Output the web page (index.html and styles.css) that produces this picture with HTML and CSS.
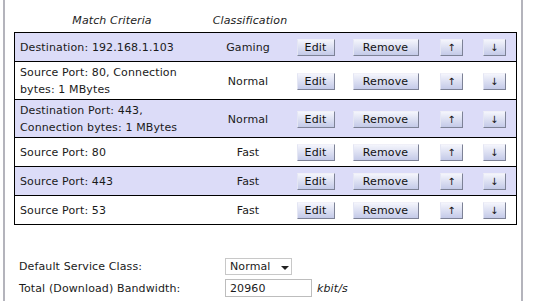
FILE: index.html
```html
<!DOCTYPE html>
<html>
<head>
<meta charset="utf-8">
<link rel="stylesheet" href="styles.css">
</head>
<body>
<div class="page">
  <div class="head">
    <span class="h-crit">Match Criteria</span>
    <span class="h-class">Classification</span>
  </div>
  <table class="rules">
    <colgroup>
      <col class="c1"><col class="c2"><col class="c3"><col class="c4"><col class="c5"><col class="c6">
    </colgroup>
    <tr class="alt">
      <td class="crit">Destination: 192.168.1.103</td>
      <td class="cls">Gaming</td>
      <td class="b"><span class="btn w-edit">Edit</span></td>
      <td class="b"><span class="btn w-rem">Remove</span></td>
      <td class="b"><span class="btn w-arr">↑</span></td>
      <td class="b"><span class="btn w-arr">↓</span></td>
    </tr>
    <tr>
      <td class="crit">Source Port: 80, Connection bytes: 1 MBytes</td>
      <td class="cls">Normal</td>
      <td class="b"><span class="btn w-edit">Edit</span></td>
      <td class="b"><span class="btn w-rem">Remove</span></td>
      <td class="b"><span class="btn w-arr">↑</span></td>
      <td class="b"><span class="btn w-arr">↓</span></td>
    </tr>
    <tr class="alt">
      <td class="crit">Destination Port: 443, Connection bytes: 1 MBytes</td>
      <td class="cls">Normal</td>
      <td class="b"><span class="btn w-edit">Edit</span></td>
      <td class="b"><span class="btn w-rem">Remove</span></td>
      <td class="b"><span class="btn w-arr">↑</span></td>
      <td class="b"><span class="btn w-arr">↓</span></td>
    </tr>
    <tr>
      <td class="crit">Source Port: 80</td>
      <td class="cls">Fast</td>
      <td class="b"><span class="btn w-edit">Edit</span></td>
      <td class="b"><span class="btn w-rem">Remove</span></td>
      <td class="b"><span class="btn w-arr">↑</span></td>
      <td class="b"><span class="btn w-arr">↓</span></td>
    </tr>
    <tr class="alt">
      <td class="crit">Source Port: 443</td>
      <td class="cls">Fast</td>
      <td class="b"><span class="btn w-edit">Edit</span></td>
      <td class="b"><span class="btn w-rem">Remove</span></td>
      <td class="b"><span class="btn w-arr">↑</span></td>
      <td class="b"><span class="btn w-arr">↓</span></td>
    </tr>
    <tr>
      <td class="crit">Source Port: 53</td>
      <td class="cls">Fast</td>
      <td class="b"><span class="btn w-edit">Edit</span></td>
      <td class="b"><span class="btn w-rem">Remove</span></td>
      <td class="b"><span class="btn w-arr">↑</span></td>
      <td class="b"><span class="btn w-arr">↓</span></td>
    </tr>
  </table>
  <div class="form">
    <div class="lbl">Default Service Class:</div>
    <div class="ctl"><span class="select">Normal<span class="caret"></span></span></div>
    <div class="lbl">Total (Download) Bandwidth:</div>
    <div class="ctl"><input class="txt" type="text" value="20960"><span class="unit">kbit/s</span></div>
  </div>
</div>
</body>
</html>
```
FILE: styles.css
```css
html, body {
  margin: 0;
  padding: 0;
  background: #fff;
}
body {
  font-family: "DejaVu Sans", Verdana, sans-serif;
  font-size: 11px;
  letter-spacing: 0.12px;
  color: #1a1a1a;
}
.page {
  margin-left: 3px;
  width: 520px;
  height: 301px;
  box-sizing: border-box;
  border-left: 2px solid #b4b4bc;
  border-right: 2px solid #b4b4bc;
  padding: 14px 0 0 9px;
}
.head {
  display: flex;
  height: 18px;
  font-style: italic;
  color: #222;
}
.h-crit {
  width: 196px;
  text-align: center;
}
.h-class {
  width: 80px;
  text-align: center;
}
.rules {
  border-collapse: collapse;
  width: 502px;
  table-layout: fixed;
  border: 1px solid #000;
}
.c1 { width: 191px; }
.c2 { width: 85px; }
.c3 { width: 50px; }
.c4 { width: 90px; }
.c5 { width: 42px; }
.c6 { width: 44px; }
.rules tr {
  border-top: 1px solid #000;
}
.rules tr.alt td {
  background: #dcdcf8;
}
.rules td {
  padding: 2px 0 1px;
  line-height: 17px;
  vertical-align: middle;
}
.rules td.crit {
  padding-left: 5px;
  padding-right: 4px;
}
.rules td.cls, .rules td.b {
  text-align: center;
}
.btn {
  display: inline-block;
  box-sizing: border-box;
  height: 17px;
  line-height: 15px;
  margin: 4px 0 4px;
  vertical-align: middle;
  color: #111;
  background: linear-gradient(#f4f5fc, #c4cae8);
  border: 1px solid;
  border-color: #f0f0f8 #7d8296 #7d8296 #e4e6f4;
  text-align: center;
}
.w-edit { width: 38px; }
.w-rem { width: 66px; }
.w-arr { width: 23px; font-size: 10px; }
.form {
  display: grid;
  grid-template-columns: 206px auto;
  row-gap: 4px;
  margin-top: 33px;
  padding-left: 5px;
}
.lbl {
  height: 17px;
  line-height: 17px;
  align-self: center;
}
.ctl {
  display: flex;
  align-items: center;
}
.select {
  display: inline-flex;
  align-items: center;
  box-sizing: border-box;
  width: 67px;
  height: 17px;
  border: 1px solid #c8c8c8;
  padding-left: 4px;
  line-height: 15px;
}
.caret {
  width: 0;
  height: 0;
  border-left: 4px solid transparent;
  border-right: 4px solid transparent;
  border-top: 4px solid #222;
  margin-left: 10px;
  margin-top: 2px;
}
.txt {
  box-sizing: border-box;
  width: 87px;
  height: 18px;
  margin: 0;
  border: 1px solid #bdbdbd;
  padding: 0 4px;
  font-family: "DejaVu Sans", Verdana, sans-serif;
  font-size: 11px;
  letter-spacing: 0.12px;
  color: #1a1a1a;
  outline: none;
}
.unit {
  font-style: italic;
  margin-left: 5px;
}
```
